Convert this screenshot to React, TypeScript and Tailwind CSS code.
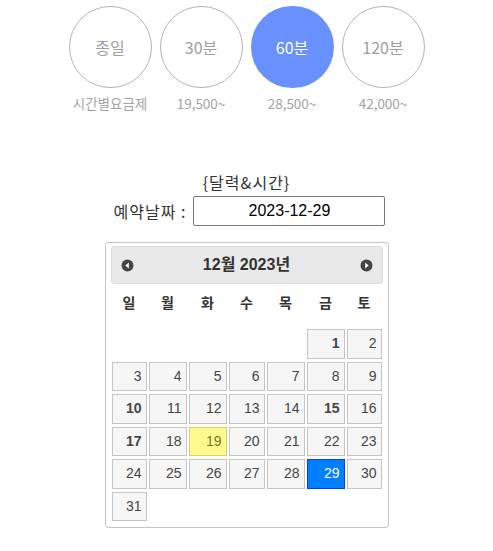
import React from "react";

const kr = { fontFamily: '"Noto Sans CJK KR", "Noto Sans", sans-serif' };
const ar = { fontFamily: '"Liberation Sans", Arial, "Noto Sans CJK KR", sans-serif' };

const plans = [
  { t: "종일", s: "시간별요금제", active: false },
  { t: "30분", s: "19,500~", active: false },
  { t: "60분", s: "28,500~", active: true },
  { t: "120분", s: "42,000~", active: false },
];

const cols = ["일", "월", "화", "수", "목", "금", "토"];

const rows: (number | null)[][] = [
  [null, null, null, null, null, 1, 2],
  [3, 4, 5, 6, 7, 8, 9],
  [10, 11, 12, 13, 14, 15, 16],
  [17, 18, 19, 20, 21, 22, 23],
  [24, 25, 26, 27, 28, 29, 30],
  [31, null, null, null, null, null, null],
];

const bold = new Set([1, 10, 15, 17]);

function Arrow({ dir }: { dir: "l" | "r" }) {
  return (
    <svg width="13" height="13" viewBox="0 0 13 13">
      <circle cx="6.5" cy="6.5" r="6" fill="#444444" />
      {dir === "l" ? (
        <path d="M4.3 6.5 L7.8 3.6 L7.8 9.4 Z" fill="#ffffff" />
      ) : (
        <path d="M8.7 6.5 L5.2 3.6 L5.2 9.4 Z" fill="#ffffff" />
      )}
    </svg>
  );
}

export default function App() {
  return (
    <div className="w-[493px] h-[551px] bg-white overflow-hidden" style={kr}>
      <div className="flex justify-center gap-[8px] pt-[6px]">
        {plans.map((p) => (
          <div key={p.t} className="w-[83px] flex flex-col items-center">
            <div
              className={
                "w-[83px] h-[82px] rounded-full flex items-center justify-center text-[16px] " +
                (p.active
                  ? "bg-[#6891ff] text-white"
                  : "border-[1.5px] border-[#b4b4b4] text-[#a0a0a0]")
              }
            >
              {p.t}
            </div>
            <div className="mt-[6px] leading-[18px] text-[#a3a3a3] whitespace-nowrap text-[13.5px]">
              {p.s}
            </div>
          </div>
        ))}
      </div>

      <div className="mt-[59px] text-center text-[16px] leading-[22px] text-[#333333] tracking-[1px]">{"{달력&시간}"}</div>
      <div className="flex justify-center items-center gap-[7px] mt-[3px] pl-[6px]">
        <span className="text-[16px] text-[#333333] tracking-[1px]">예약날짜 :</span>
        <div
          className="w-[192px] h-[30px] border border-[#767676] rounded-[2px] flex items-center justify-center text-[16px] text-black"
          style={ar}
        >
          2023-12-29
        </div>
      </div>

      <div
        className="mt-[16px] mx-auto w-[284px] h-[286px] border border-[#c5c5c5] rounded-[3px] px-[5px] pt-[3px]"
        style={ar}
      >
        <div className="h-[38px] border border-[#dddddd] bg-[#e9e9e9] rounded-[3px] flex items-center justify-between px-[9px]">
          <Arrow dir="l" />
          <div className="text-[16px] font-bold text-[#333333]">12월 2023년</div>
          <Arrow dir="r" />
        </div>
        <div className="px-[1px]">
          <div className="h-[38px] grid grid-cols-[35px_38px_38px_36px_38px_38px_35px] gap-x-[2px] items-center">
            {cols.map((c) => (
              <div key={c} className="text-center text-[14px] font-bold text-[#333333]">
                {c}
              </div>
            ))}
          </div>
          <div className="mt-[7px] grid grid-cols-[35px_38px_38px_36px_38px_38px_35px] gap-x-[2px] gap-y-[3px] auto-rows-[29.5px]">
            {rows.flat().map((d, i) => {
              if (d === null) return <div key={i} />;
              let cls = "border border-[#c5c5c5] bg-[#f6f6f6] text-[#454545]";
              if (d === 19) cls = "border border-[#dad55e] bg-[#fffa90] text-[#777620]";
              if (d === 29) cls = "border border-[#003eff] bg-[#007fff] text-white";
              return (
                <div
                  key={i}
                  className={cls + " flex items-center justify-end pr-[4px] text-[14px] " + (bold.has(d) ? "font-bold" : "")}
                >
                  {d}
                </div>
              );
            })}
          </div>
        </div>
      </div>
    </div>
  );
}
